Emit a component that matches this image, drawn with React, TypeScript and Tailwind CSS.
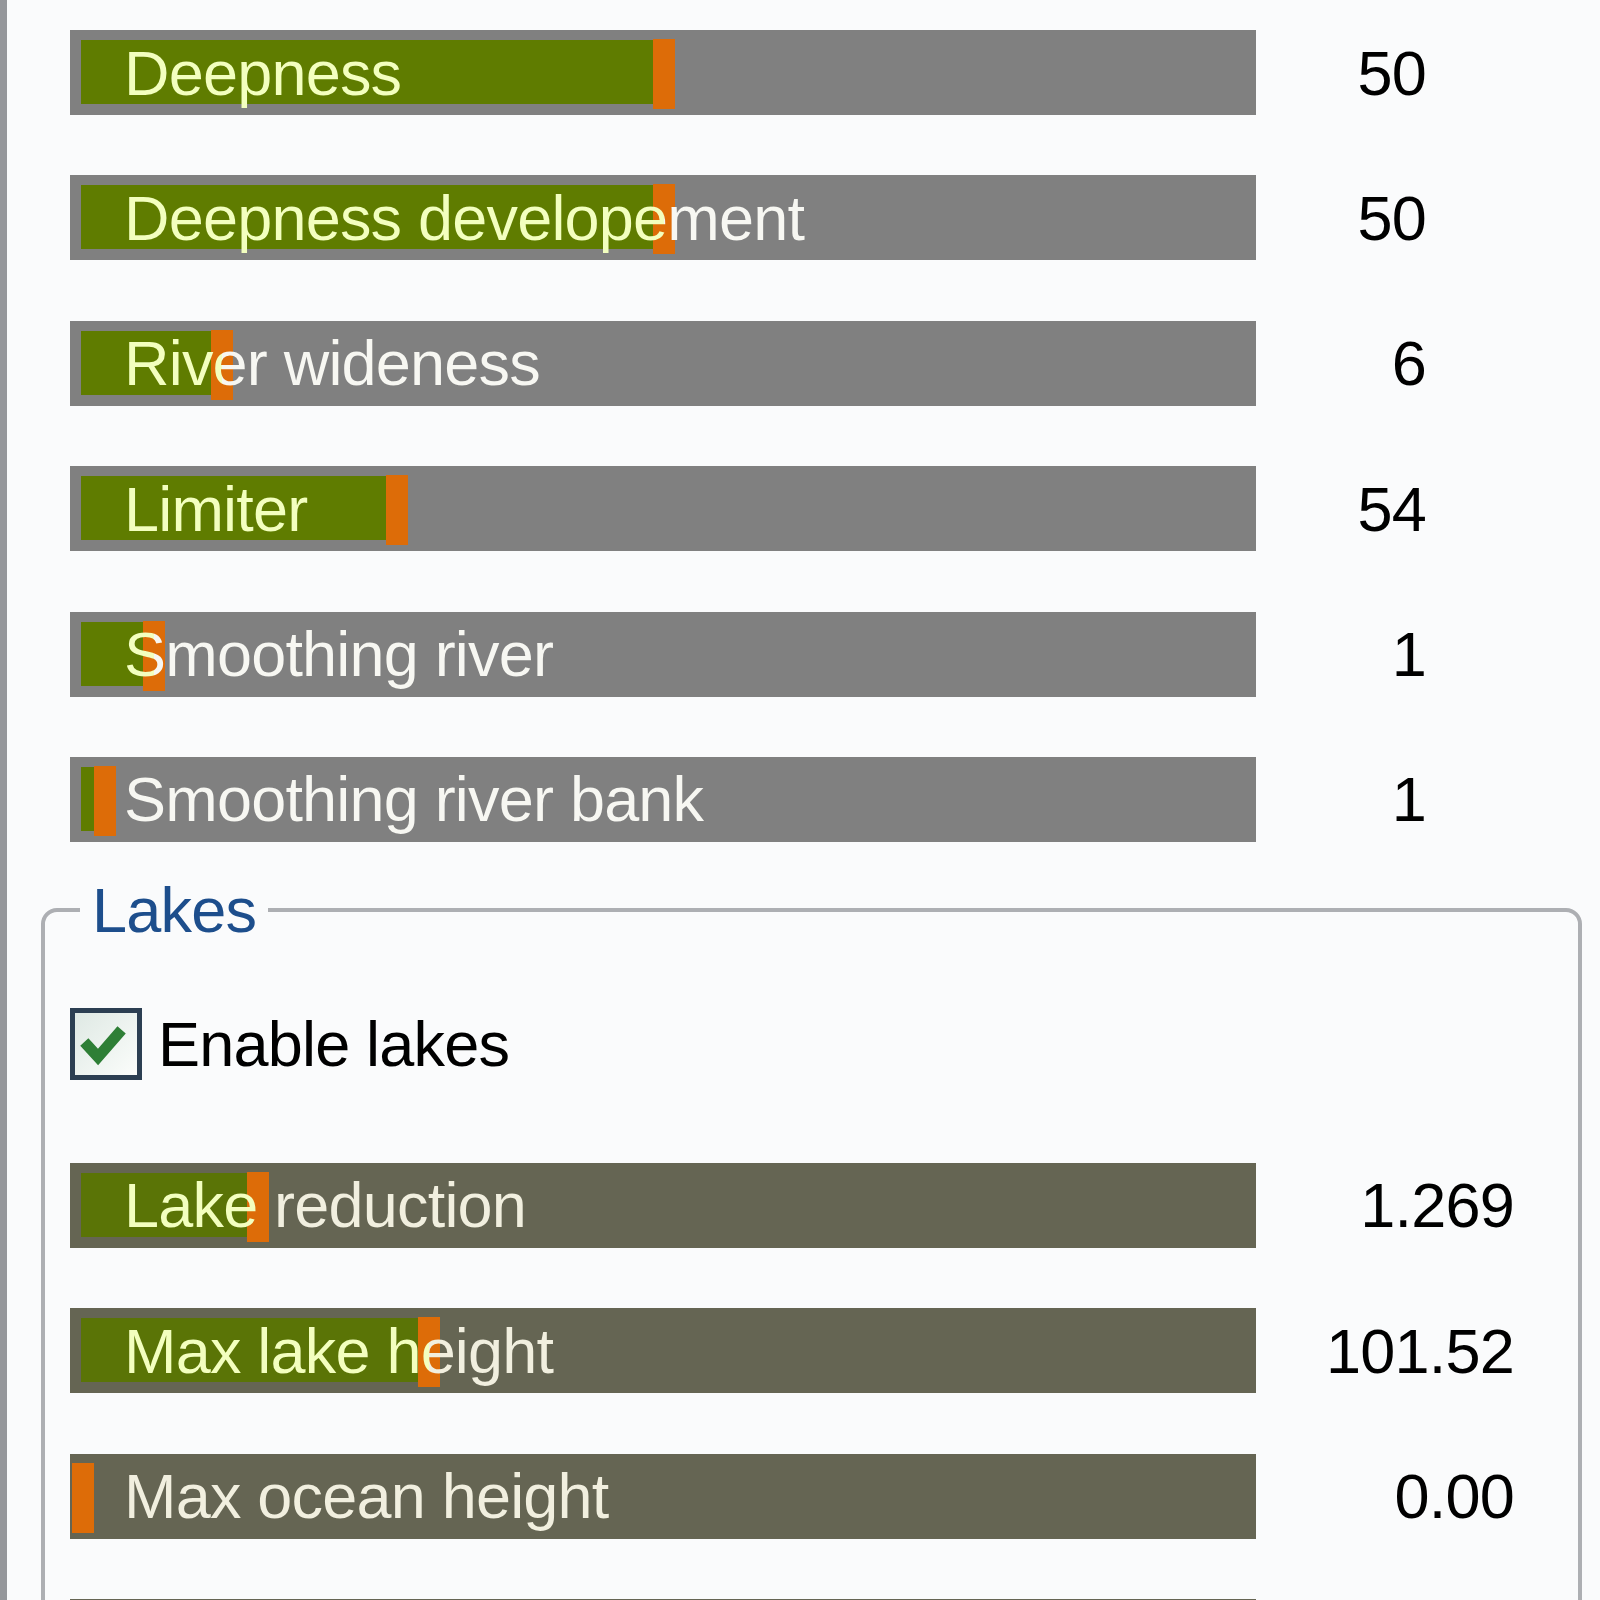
import React from 'react';

type Slider = { label: string; value: string; thumb: number };

const riverSliders: Slider[] = [
  { label: 'Deepness', value: '50', thumb: 583 },
  { label: 'Deepness developement', value: '50', thumb: 583 },
  { label: 'River wideness', value: '6', thumb: 141 },
  { label: 'Limiter', value: '54', thumb: 316 },
  { label: 'Smoothing river', value: '1', thumb: 73 },
  { label: 'Smoothing river bank', value: '1', thumb: 24 },
];

const lakeSliders: Slider[] = [
  { label: 'Lake reduction', value: '1.269', thumb: 177 },
  { label: 'Max lake height', value: '101.52', thumb: 348 },
  { label: 'Max ocean height', value: '0.00', thumb: 2 },
];

const SliderBar = ({ s, dark }: { s: Slider; dark?: boolean }) => {
  // label is tinted yellow over the filled part, plain past the thumb
  const clip = s.thumb + 11;
  const plain = dark ? '#f1efdf' : '#f7f7f2';
  return (
    <div className={`relative h-[85px] w-[1186px] shrink-0 ${dark ? 'bg-[#656553]' : 'bg-[#808080]'}`}>
      <div
        className={`absolute top-[10px] bottom-[11px] left-[11px] ${dark ? 'bg-[#5a7406]' : 'bg-[#5f7c00]'}`}
        style={{ width: Math.max(0, s.thumb - 11) }}
      />
      <div className="absolute top-[9px] bottom-[6px] w-[22px] bg-[#dd6c08]" style={{ left: s.thumb }} />
      <div
        className="absolute inset-0 flex items-center bg-clip-text pl-[54px] whitespace-nowrap text-transparent"
        style={{ backgroundImage: `linear-gradient(to right, #f3ffbf ${clip}px, ${plain} ${clip}px)` }}
      >
        {s.label}
      </div>
    </div>
  );
};

const App = () => {
  return (
    <div className="flex h-[1600px] w-[1600px] overflow-hidden bg-[#fafbfc] text-[63px] leading-[72px] tracking-[-0.8px] font-['Liberation_Sans',Arial,sans-serif]">
      <div className="w-[7px] shrink-0 bg-[#95979b]" />

      <div className="flex flex-col">
        {/* river sliders */}
        <div className="flex flex-col gap-[60.4px] pt-[30px] pl-[63px]">
          {riverSliders.map((s) => (
            <div key={s.label} className="flex items-center">
              <SliderBar s={s} />
              <div className="w-[170px] text-right text-black">{s.value}</div>
            </div>
          ))}
        </div>

        {/* lakes group */}
        <fieldset className="mt-[32px] ml-[34px] w-[1541px] rounded-t-[16px] border-4 border-[#adafb3]">
          <legend className="ml-[35px] px-[12px] text-[#1d4e8c]">Lakes</legend>
          <div className="flex flex-col pt-[62px] pl-[25px]">
            <label className="flex items-center gap-[16px] text-black">
              <span className="flex h-[72px] w-[72px] items-center justify-center border-[5px] border-[#2c3f52] bg-gradient-to-br from-[#dfe9e4] to-[#fbfdfb]">
                <svg width="56" height="56" viewBox="0 0 56 56">
                  <polyline
                    points="10,30 20,41 40,18"
                    fill="none"
                    stroke="#2e7f36"
                    strokeWidth="11"
                    strokeLinecap="square"
                  />
                </svg>
              </span>
              Enable lakes
            </label>

            <div className="mt-[83px] flex flex-col gap-[60.4px]">
              {lakeSliders.map((s) => (
                <div key={s.label} className="flex items-center">
                  <SliderBar s={s} dark />
                  <div className="w-[258px] text-right text-black">{s.value}</div>
                </div>
              ))}
              <div className="h-[85px] w-[1186px] bg-[#656553]" />
            </div>
          </div>
        </fieldset>
      </div>
    </div>
  );
};

export default App;
